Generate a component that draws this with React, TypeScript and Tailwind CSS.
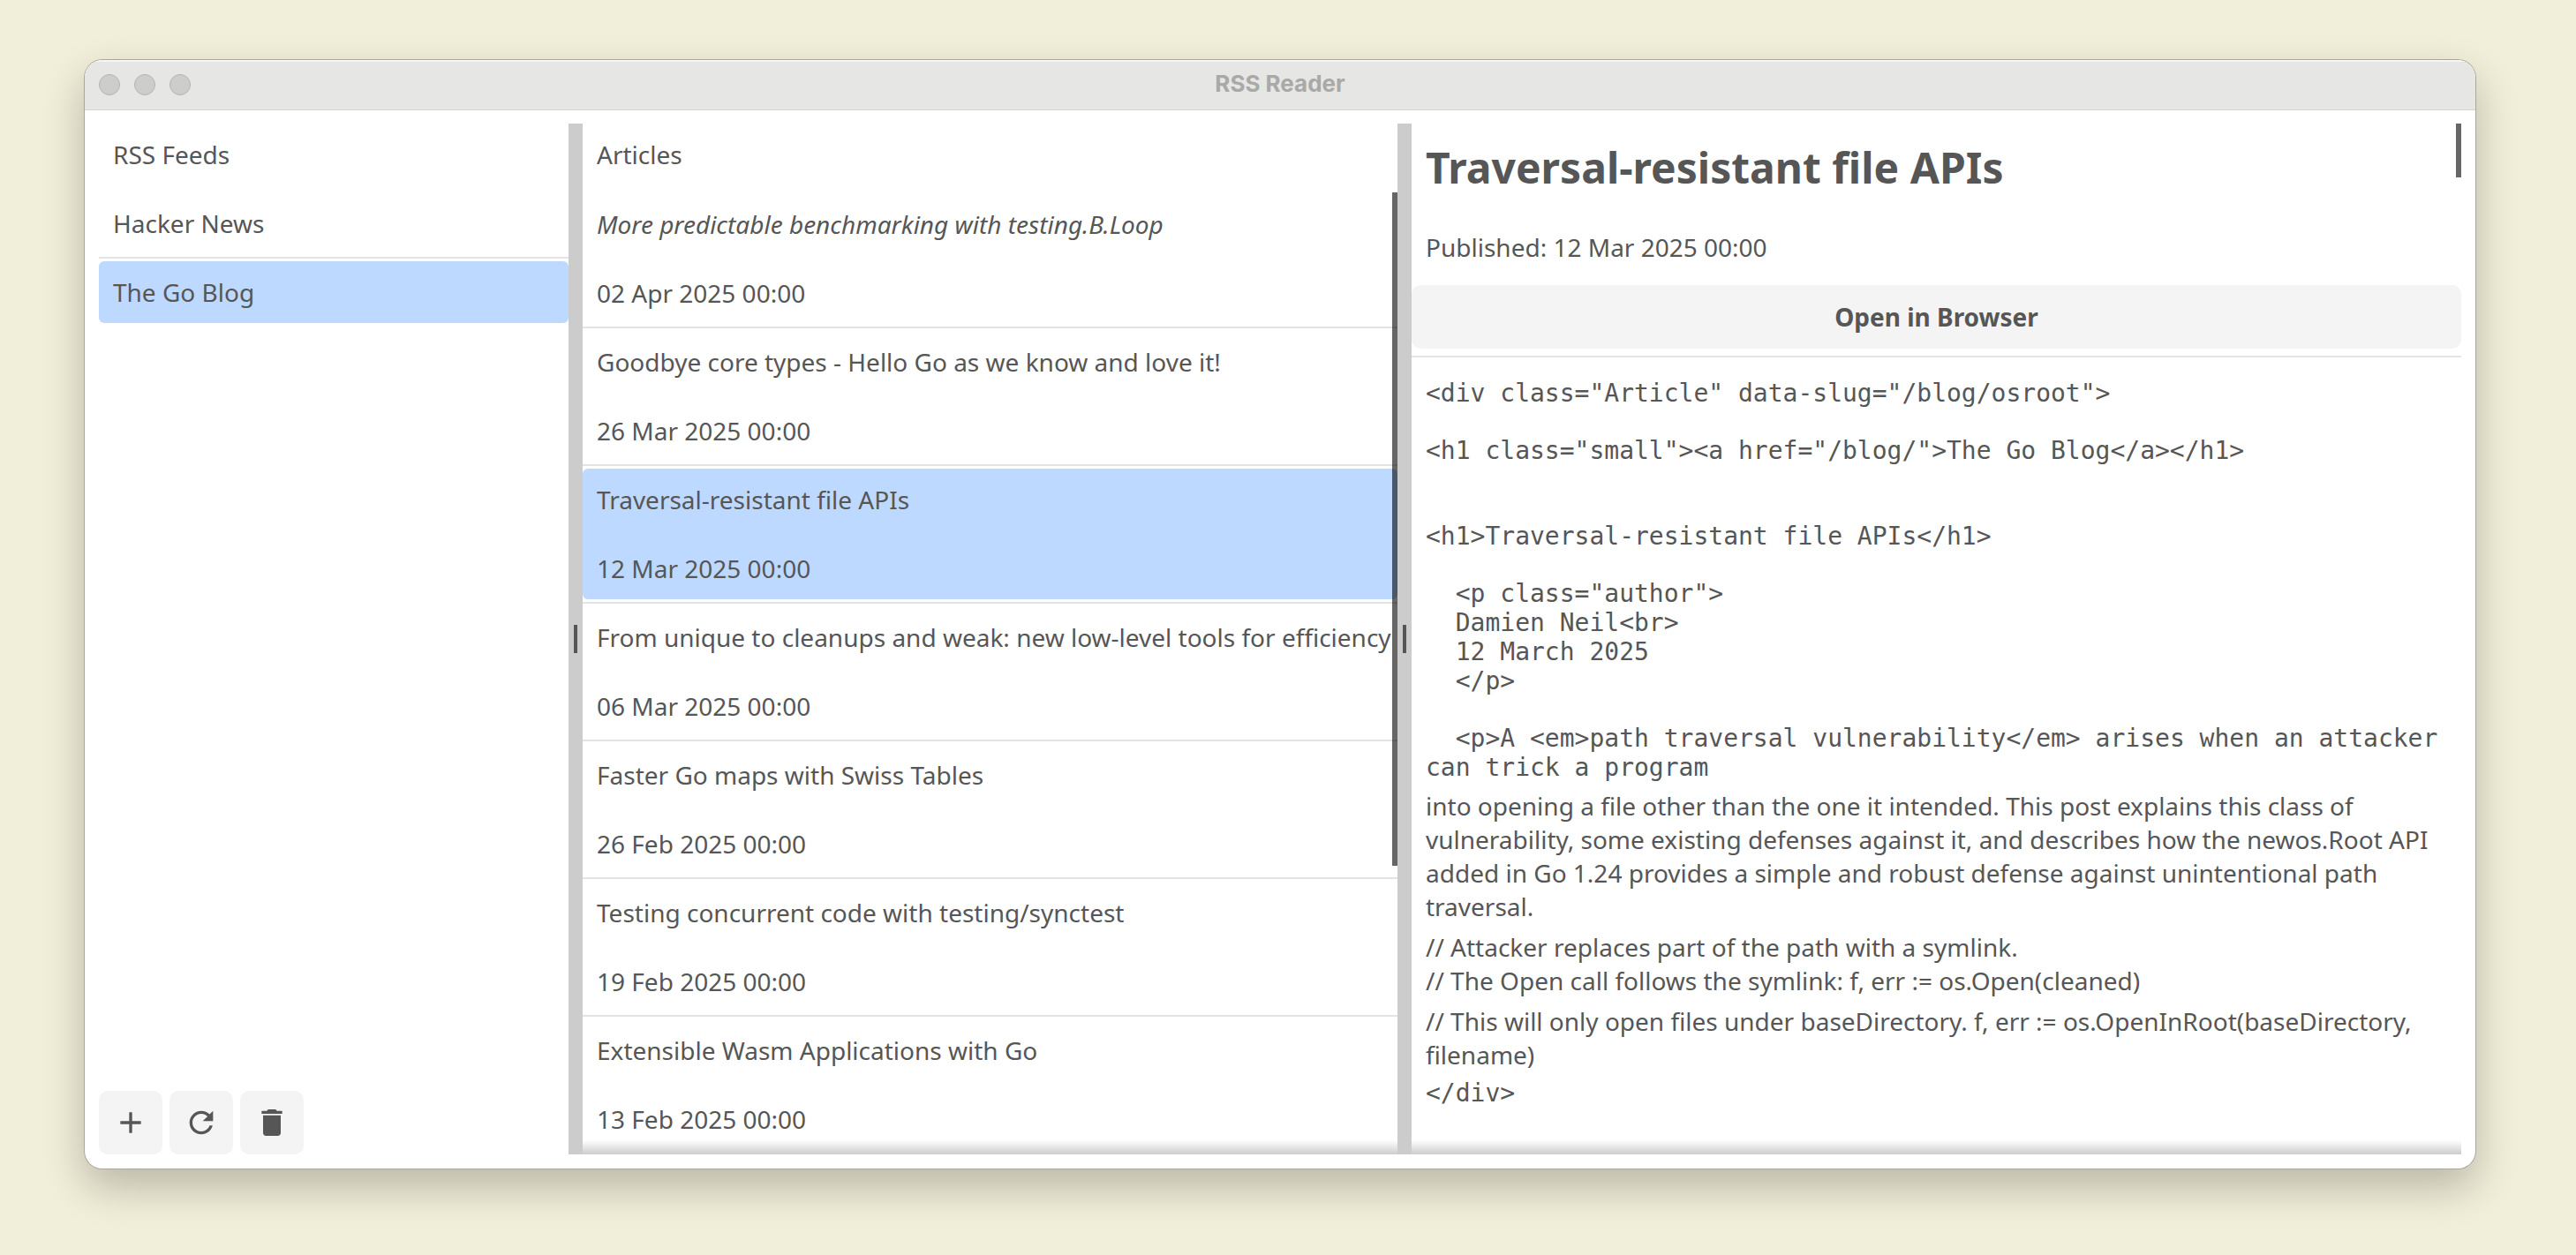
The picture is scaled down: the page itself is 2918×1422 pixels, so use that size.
import { useState } from "react";

const feeds = ["Hacker News", "The Go Blog"];

const articles = [
  { title: "More predictable benchmarking with testing.B.Loop", date: "02 Apr 2025 00:00", unread: true },
  { title: "Goodbye core types - Hello Go as we know and love it!", date: "26 Mar 2025 00:00" },
  { title: "Traversal-resistant file APIs", date: "12 Mar 2025 00:00" },
  { title: "From unique to cleanups and weak: new low-level tools for efficiency", date: "06 Mar 2025 00:00" },
  { title: "Faster Go maps with Swiss Tables", date: "26 Feb 2025 00:00" },
  { title: "Testing concurrent code with testing/synctest", date: "19 Feb 2025 00:00" },
  { title: "Extensible Wasm Applications with Go", date: "13 Feb 2025 00:00" },
];

const ADD = "M19 13h-6v6h-2v-6H5v-2h6V5h2v6h6v2z";
const REFRESH =
  "M17.65 6.35C16.2 4.9 14.21 4 12 4c-4.42 0-7.99 3.58-7.99 8s3.57 8 7.99 8c3.73 0 6.84-2.55 7.73-6h-2.08c-.82 2.33-3.04 4-5.65 4-3.31 0-6-2.69-6-6s2.69-6 6-6c1.66 0 3.14.69 4.22 1.78L13 11h7V4l-2.35 2.35z";
const DELETE = "M6 19c0 1.1.9 2 2 2h8c1.1 0 2-.9 2-2V7H6v12zM19 4h-3.5l-1-1h-5l-1 1H5v2h14V4z";

function IconButton({ label, path }: { label: string; path: string }) {
  return (
    <button aria-label={label} className="flex size-[72px] items-center justify-center rounded-[10px] bg-[#f4f4f4]">
      <svg viewBox="0 0 24 24" className="size-10 fill-current" aria-hidden="true">
        <path d={path} />
      </svg>
    </button>
  );
}

function Divider() {
  return (
    <div className="flex h-2 items-center">
      <div className="h-0.5 w-full bg-[#e3e3e3]" />
    </div>
  );
}

function Splitter() {
  return (
    <div role="separator" aria-orientation="vertical" className="flex items-center justify-center bg-[#cccccc]">
      <div className="h-8 w-1 bg-[#565656]" />
    </div>
  );
}

function BottomShade() {
  return <div className="pointer-events-none absolute inset-x-0 bottom-0 h-4 bg-linear-to-b from-black/0 to-black/20" />;
}

function TitleBar() {
  return (
    <header className="grid h-[57px] grid-cols-[1fr_auto_1fr] items-center border-t-2 border-b border-t-[#f6f6f5] border-b-[#d4d4d3] bg-[#e6e6e4] px-4 pb-0.5">
      <div className="flex gap-4">
        {["Close", "Minimize", "Zoom"].map((name) => (
          <button key={name} aria-label={name} className="size-6 rounded-full border border-[#b3b3b2] bg-[#cdcdcc]" />
        ))}
      </div>
      <h1 className="pb-0.5 font-['Inter',sans-serif] text-[26px] leading-8 font-bold text-[#a9a9a8]">RSS Reader</h1>
    </header>
  );
}

function FeedPane() {
  const [selected, setSelected] = useState(1);
  return (
    <nav className="flex min-w-0 flex-col">
      <h2 className="px-4 py-4">RSS Feeds</h2>
      <div className="h-2" />
      <ul className="flex-1">
        {feeds.map((feed, i) => (
          <li key={feed}>
            {i > 0 && <Divider />}
            <button
              onClick={() => setSelected(i)}
              className={`w-full rounded-md p-4 text-left ${selected === i ? "bg-[#bdd9ff]" : ""}`}
            >
              {feed}
            </button>
          </li>
        ))}
      </ul>
      <div className="flex gap-2">
        <IconButton label="Add feed" path={ADD} />
        <IconButton label="Refresh" path={REFRESH} />
        <IconButton label="Delete feed" path={DELETE} />
      </div>
    </nav>
  );
}

function ArticlePane() {
  const [selected, setSelected] = useState(2);
  return (
    <section className="relative flex min-w-0 flex-col overflow-hidden">
      <h2 className="px-4 py-4">Articles</h2>
      <div className="h-2" />
      <div className="relative flex-1">
        <ul className="pt-px">
          {articles.map((a, i) => (
            <li key={a.title}>
              {i > 0 && <Divider />}
              <button
                onClick={() => setSelected(i)}
                className={`flex w-full flex-col gap-2 overflow-hidden rounded-md text-left whitespace-nowrap ${
                  selected === i ? "bg-[#bdd9ff]" : ""
                }`}
              >
                <span className={`p-4 ${a.unread ? "italic" : ""}`}>{a.title}</span>
                <span className="p-4">{a.date}</span>
              </button>
            </li>
          ))}
        </ul>
        <div className="absolute top-0 right-0 h-[70%] w-1.5 bg-black/60" />
      </div>
      <BottomShade />
    </section>
  );
}

function ReaderPane() {
  return (
    <main className="relative min-w-0">
      <h2 className="px-4 pt-[17px] pb-3.5 text-5xl leading-[66px] font-bold">Traversal-resistant file APIs</h2>
      <p className="mt-2 p-4">Published: 12 Mar 2025 00:00</p>
      <button className="mt-2 w-full rounded-[10px] bg-[#f4f4f4] py-[17px] font-bold">Open in Browser</button>
      <div className="mt-2 h-0.5 bg-[#e3e3e3]" />
      <article className="px-4 pt-6">
        <div className="flex flex-col gap-8 font-['DejaVu_Sans_Mono',monospace] leading-[33px] whitespace-pre-wrap">
          <p>{'<div class="Article" data-slug="/blog/osroot">'}</p>
          <p>{'<h1 class="small"><a href="/blog/">The Go Blog</a></h1>'}</p>
          <p className="pt-8">{"<h1>Traversal-resistant file APIs</h1>"}</p>
          <p>{'  <p class="author">\n  Damien Neil<br>\n  12 March 2025\n  </p>'}</p>
          <p>{"  <p>A <em>path traversal vulnerability</em> arises when an attacker can trick a program"}</p>
        </div>
        <p className="mt-2">
          into opening a file other than the one it intended. This post explains this class of vulnerability, some
          existing defenses against it, and describes how the newos.Root API added in Go 1.24 provides a simple and
          robust defense against unintentional path traversal.
        </p>
        <p className="mt-2">
          // Attacker replaces part of the path with a symlink.
          <br />
          // The Open call follows the symlink: f, err := os.Open(cleaned)
        </p>
        <p className="mt-2">
          // This will only open files under baseDirectory. f, err := os.OpenInRoot(baseDirectory, filename)
        </p>
        <p className="mt-2 font-['DejaVu_Sans_Mono',monospace] leading-[33px]">{"</div>"}</p>
      </article>
      <div className="absolute top-0 right-0 h-[61px] w-1.5 bg-black/60" />
      <BottomShade />
    </main>
  );
}

export default function App() {
  return (
    <div className="flex min-h-screen bg-[#f1eed9] pt-[68px] pr-[114px] pb-[98px] pl-24 font-['Noto_Sans',sans-serif] text-[28px] leading-[38px] text-[#565656]">
      <div className="flex flex-1 flex-col overflow-hidden rounded-[20px] bg-white shadow-[0_0_0_1px_#aaa89a,0_20px_48px_rgba(0,0,0,0.24)]">
        <TitleBar />
        <div className="grid flex-1 grid-cols-[532fr_16px_923fr_16px_1189fr] px-4 pt-[15px] pb-4">
          <FeedPane />
          <Splitter />
          <ArticlePane />
          <Splitter />
          <ReaderPane />
        </div>
      </div>
    </div>
  );
}
